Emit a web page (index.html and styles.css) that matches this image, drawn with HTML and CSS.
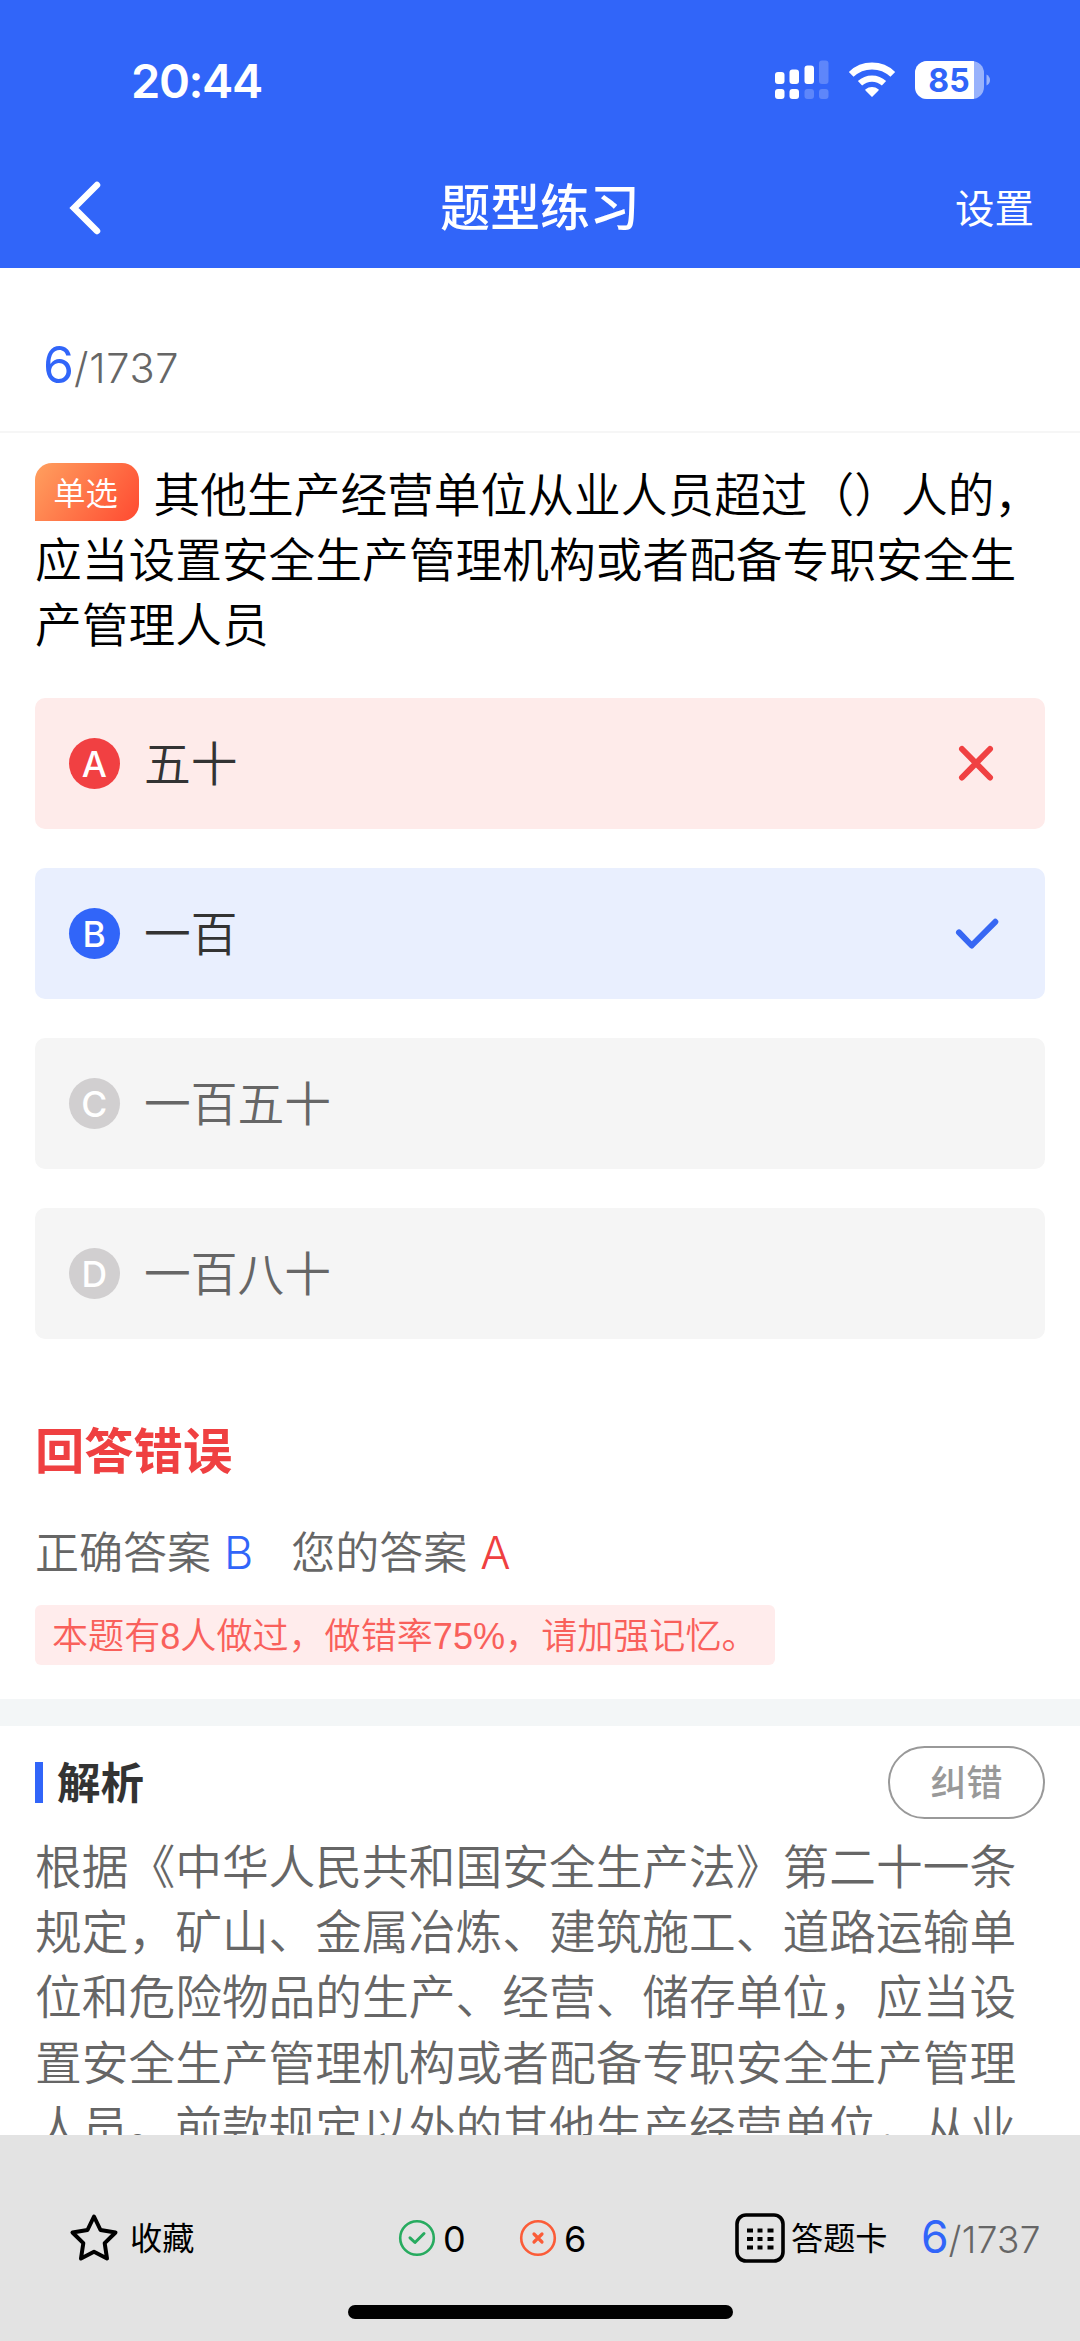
FILE: index.html
```html
<!DOCTYPE html>
<html lang="zh-CN">
<head>
<meta charset="utf-8">
<title>题型练习</title>
<link rel="stylesheet" href="styles.css">
</head>
<body>
<div class="screen">
  <header class="header">
    <div class="status">
      <span class="time">20:44</span>
      <svg class="status-icons" width="216" height="40" viewBox="0 0 216 40" fill="#fff">
        <rect x="0" y="12" width="9.5" height="12" rx="3"/>
        <rect x="14.5" y="9.500" width="9.500" height="14.500" rx="3"/>
        <rect x="29.500" y="5.500" width="9.500" height="18.500" rx="3"/>
        <rect x="44" y="0.500" width="9.500" height="23.500" rx="3" opacity=".22"/>
        <rect x="0" y="29" width="9.500" height="10" rx="3"/>
        <rect x="14.500" y="29" width="9.500" height="10" rx="3"/>
        <rect x="29.500" y="29" width="9.500" height="10" rx="3" opacity=".22"/>
        <rect x="44" y="29" width="9.500" height="10" rx="3" opacity=".22"/>
        <path d="M97 37 L90.500 30.500 Q89.800 29.800 90.600 29.200 A10 10 0 0 1 103.400 29.200 Q104.200 29.800 103.500 30.500 Z"/>
        <path d="M85 23.300 A17.500 17.500 0 0 1 109 23.300" fill="none" stroke="#fff" stroke-width="6.200"/>
        <path d="M76.200 14.400 A30 30 0 0 1 117.800 14.400" fill="none" stroke="#fff" stroke-width="6.800"/>
        <clipPath id="cell"><rect x="140" y="1" width="69" height="38" rx="12"/></clipPath>
        <g clip-path="url(#cell)">
          <rect x="140" y="1" width="69" height="38" opacity=".5"/>
          <rect x="140" y="1" width="59" height="38"/>
        </g>
        <path d="M211.500 14.500 Q215 16.500 215 20 Q215 23.500 211.500 25.500 Z" opacity=".5"/>
        <text class="level" x="174" y="31.800" text-anchor="middle">85</text>
      </svg>
    </div>
    <nav class="nav">
      <svg class="back" width="34" height="58" viewBox="0 0 34 58"><path d="M29 6 L6 29 L29 52" fill="none" stroke="#fff" stroke-width="6.500" stroke-linecap="round"/></svg>
      <h1 class="title">题型练习</h1>
      <span class="settings">设置</span>
    </nav>
  </header>

  <div class="counter"><span class="current">6</span><span class="total">/1737</span></div>

  <main class="content">
    <section class="quiz">
      <p class="question"><span class="tag">单选</span>其他生产经营单位从业人员超过（）人的，应当设置安全生产管理机构或者配备专职安全生产管理人员</p>
      <ul class="options">
        <li class="option wrong"><span class="letter">A</span><span class="label">五十</span>
          <svg class="mark" width="44" height="44" viewBox="0 0 44 44"><path d="M7 7 L35 35.500 M35 7 L7 35.500"/></svg></li>
        <li class="option right"><span class="letter">B</span><span class="label">一百</span>
          <svg class="mark" width="44" height="44" viewBox="0 0 44 44"><path d="M4 20.400 L16.700 33.500 L40.300 9.800"/></svg></li>
        <li class="option"><span class="letter">C</span><span class="label">一百五十</span></li>
        <li class="option"><span class="letter">D</span><span class="label">一百八十</span></li>
      </ul>
      <h2 class="result">回答错误</h2>
      <p class="answers"><span>正确答案</span><b class="blue">B</b><span class="yours">您的答案</span><b class="red">A</b></p>
      <p class="tip">本题有8人做过，做错率75%，请加强记忆。</p>
    </section>
    <section class="analysis">
      <div class="analysis-head">
        <h2 class="analysis-title">解析</h2>
        <span class="report">纠错</span>
      </div>
      <p class="analysis-text">根据《中华人民共和国安全生产法》第二十一条规定，矿山、金属冶炼、建筑施工、道路运输单位和危险物品的生产、经营、储存单位，应当设置安全生产管理机构或者配备专职安全生产管理人员。前款规定以外的其他生产经营单位，从业</p>
    </section>
  </main>

  <footer class="footer">
    <div class="tools">
      <div class="tool favorite">
        <svg width="52" height="52" viewBox="0 0 52 52"><path d="M26 4.500 L32.500 18 L47.500 20.500 L36.700 31.200 L39 46.500 L26 39.800 L13 46.500 L15.300 31.200 L4.500 20.500 L19.500 18 Z" fill="none" stroke="#000" stroke-width="4" stroke-linejoin="round"/></svg>
        <span>收藏</span>
      </div>
      <div class="tool correct">
        <svg width="38" height="38" viewBox="0 0 38 38" fill="none" stroke="#27ab5f" stroke-linecap="round" stroke-linejoin="round"><circle cx="19" cy="19" r="16.800" stroke-width="2.600"/><path d="M12 18.800 L17 23.500 L26 14.500" stroke-width="3"/></svg>
        <span class="num">0</span>
      </div>
      <div class="tool incorrect">
        <svg width="38" height="38" viewBox="0 0 38 38" fill="none" stroke="#fb5c38" stroke-linecap="round"><circle cx="19" cy="19" r="16.800" stroke-width="2.600"/><path d="M15 15 L23 23 M23 15 L15 23" stroke-width="3.200"/></svg>
        <span class="num">6</span>
      </div>
      <div class="tool card">
        <svg width="50" height="50" viewBox="0 0 50 50"><rect x="2" y="2" width="46" height="46" rx="9" fill="none" stroke="#000" stroke-width="3.600"/><path d="M12 17.500h6m4.500 0h5m5 0h6M12 26h6m4.500 0h5m5 0h6M12 34.500h6m4.500 0h5m5 0h6" stroke="#000" stroke-width="4"/></svg>
        <span>答题卡</span>
      </div>
      <div class="pager"><span class="current">6</span><span class="total">/1737</span></div>
    </div>
    <div class="home"></div>
  </footer>
</div>
</body>
</html>
```

FILE: styles.css
```css
* { box-sizing: border-box; margin: 0; padding: 0; }

body {
  background: #fff;
  font-family: Inter, "Noto Sans CJK SC", sans-serif;
  text-spacing-trim: space-all;
}

.screen {
  display: flex;
  flex-direction: column;
  width: 1080px;
  height: 2341px;
  overflow: hidden;
}

svg { display: block; flex: none; }

.header { flex: none; height: 268px; background: #3165f9; color: #fff; }

.status {
  display: flex;
  justify-content: space-between;
  align-items: center;
  height: 160px;
  padding: 0 89px 0 131px;
}
.time { font-size: 47px; font-weight: 600; letter-spacing: -1.4px; }
.level { font: 700 32px Inter, sans-serif; fill: #3165f9; }

.nav {
  display: grid;
  grid-template-columns: 1fr auto 1fr;
  align-items: center;
  height: 94px;
  padding: 0 46px;
}
.back { margin-left: 22px; }
.title { font-size: 49.85px; font-weight: 500; line-height: 94px; }
.settings { justify-self: end; padding-top: 2px; font-size: 39.5px; line-height: 94px; }

.counter {
  flex: none;
  height: 165px;
  padding: 0 43px;
  border-bottom: 2px solid #f6f6f6;
  line-height: 194px;
  white-space: nowrap;
}
.current { font-size: 50px; color: #3165f9; }
.total { font-size: 41.5px; font-weight: 350; color: #666; letter-spacing: 0.7px; }

.content { flex: 1; min-height: 0; overflow: hidden; }

.quiz { height: 1266px; padding: 30px 35px 0; }

.question { font-size: 46.73px; font-weight: 350; line-height: 65.2px; color: #000; }
.tag {
  display: inline-block;
  width: 104px;
  height: 58px;
  padding-right: 3px;
  margin-right: 14.5px;
  border-radius: 17px 17px 17px 0;
  background: linear-gradient(125deg, #ffa05f, #ff4a31);
  color: #fff;
  font-size: 32.3px;
  line-height: 61px;
  text-align: center;
  vertical-align: top;
}

.options { display: flex; flex-direction: column; gap: 39px; margin-top: 39.4px; list-style: none; }
.option {
  display: flex;
  align-items: center;
  height: 131px;
  padding: 0 46px 0 33.5px;
  border-radius: 10px;
  background: #f5f5f5;
  color: #666;
  font-size: 46.73px;
  font-weight: 350;
}
.letter {
  width: 51.5px;
  height: 51.5px;
  margin-right: 24px;
  border-radius: 50%;
  background: #d1cfd0;
  color: #fff;
  font-size: 35.5px;
  font-weight: 550;
  line-height: 53px;
  text-align: center;
}
.label { flex: 1; line-height: 60px; }
.mark { fill: none; stroke-width: 6; stroke-linecap: round; stroke-linejoin: round; }
.wrong { background: #feebea; color: #333; }
.wrong .letter { background: #f14042; }
.wrong .mark { stroke: #f04142; }
.right { background: #e9effe; color: #333; }
.right .letter { background: #3165f9; }
.right .mark { stroke: #3767f3; }

.result { margin-top: 76px; font-size: 49.3px; font-weight: 700; line-height: 72px; color: #ef4041; }

.answers { display: flex; margin-top: 33px; font-size: 44px; font-weight: 350; line-height: 66px; color: #666; }
.answers b { margin-left: 13px; font-size: 45px; font-weight: 350; }
.yours { margin-left: 38px; }
.blue { color: #3165f9; }
.red { color: #ef4041; }

.tip {
  width: 740px;
  height: 60px;
  margin-top: 19px;
  padding-left: 17px;
  border-radius: 6px;
  background: #ffecec;
  color: #f9605b;
  font-family: "Liberation Sans", "Noto Sans CJK SC", sans-serif;
  font-size: 36.1px;
  font-weight: 350;
  line-height: 63px;
  white-space: nowrap;
}

.analysis { padding: 20px 35px 0; border-top: 27px solid #f3f6f7; }
.analysis-head { display: flex; justify-content: space-between; align-items: center; height: 73px; }
.analysis-title {
  display: flex;
  align-items: center;
  gap: 14px;
  font-size: 43.5px;
  font-weight: 700;
  line-height: 60px;
  color: #333;
}
.analysis-title::before { content: ""; width: 8px; height: 41px; background: #3165f9; }
.report {
  width: 157px;
  height: 73px;
  border: 2.5px solid #999;
  border-radius: 37px;
  color: #999;
  font-size: 36px;
  font-weight: 500;
  line-height: 70px;
  text-align: center;
}
.analysis-text { margin-top: 16px; font-size: 46.73px; font-weight: 350; line-height: 65.2px; color: #666; }

.footer { flex: none; height: 206px; background: #e3e3e3; color: #000; }
.tools { display: flex; align-items: center; height: 170px; padding-top: 36px; }
.tool { display: flex; align-items: center; font-size: 32.2px; line-height: 50px; }
.tool span { padding-top: 1px; }
.num { font-size: 36px; }
.favorite { width: 330px; margin-left: 68px; gap: 10px; }
.correct { width: 121px; gap: 7px; }
.incorrect { width: 216px; gap: 7px; }
.card { width: 186px; gap: 6px; }
.pager { padding-top: 8px; white-space: nowrap; line-height: 60px; }
.pager .current { font-size: 44.5px; }
.pager .total { font-size: 37px; letter-spacing: 0.3px; }
.home { width: 385px; height: 14px; margin: 0 auto; border-radius: 7px; background: #000; }
```
